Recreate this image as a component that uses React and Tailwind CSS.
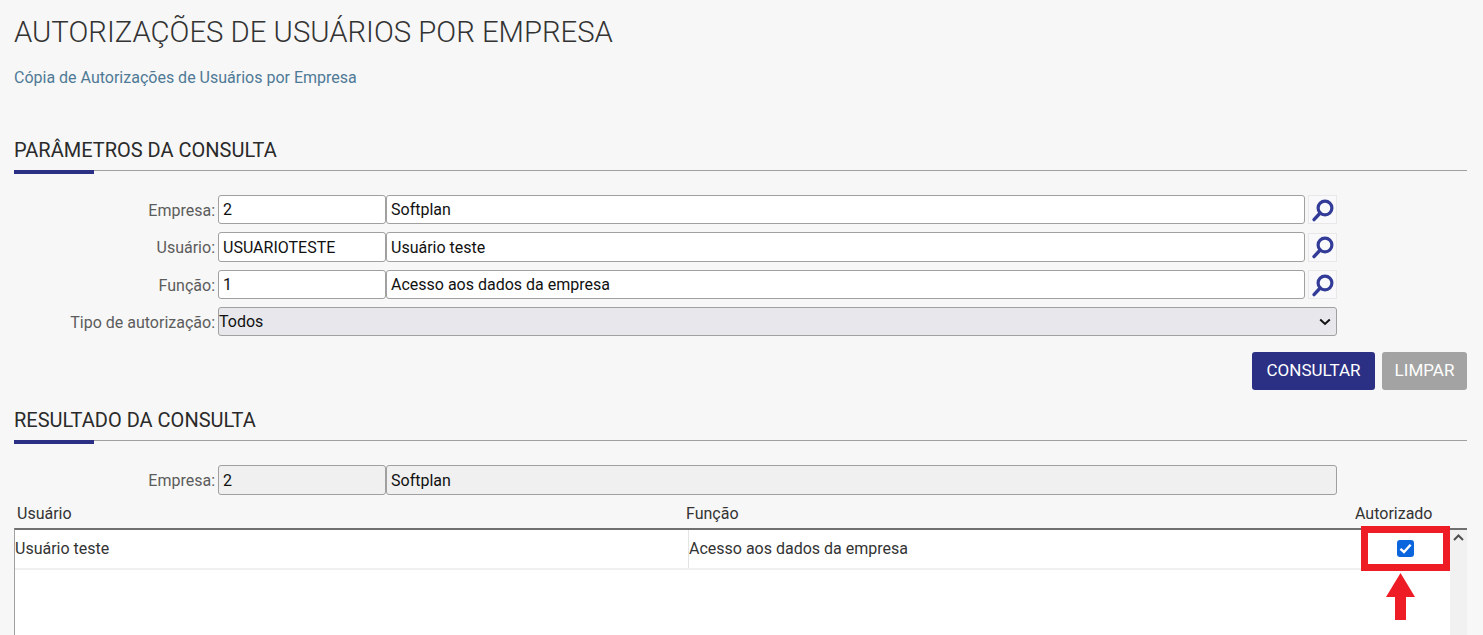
import React from "react";

const F = "font-['Roboto',sans-serif]";

function Lens() {
  return (
    <div className="ml-[3px] w-[29px] h-[29px] border border-[#e8e8e8] bg-[#f9f9fb] flex items-center justify-center">
      <svg width="25" height="26" viewBox="0 0 25 26" fill="none">
        <circle cx="15" cy="11" r="6.9" stroke="#333b98" strokeWidth="3.2" />
        <path d="M10.2 16 L4 22.6" stroke="#333b98" strokeWidth="3.4" strokeLinecap="round" />
      </svg>
    </div>
  );
}

function Box({ className = "", children }) {
  return (
    <div className={`h-full border border-[#a0a0a0] rounded-[3px] pl-[4px] pt-[1px] flex items-center text-[16px] text-[#111] ${className}`}>
      {children}
    </div>
  );
}

function Row({ label, code, name, h = "h-[30px]", disabled = false, lens = true, className = "" }) {
  const bg = disabled ? "bg-[#f0f0f0]" : "bg-white";
  return (
    <div className={`flex items-center ${h} ${className}`}>
      <div className="w-[204px] shrink-0 text-right pr-[3px] pt-[2px] text-[16px] text-[#5c5c5c]">{label}</div>
      <Box className={`w-[168px] shrink-0 ${bg}`}>{code}</Box>
      <Box className={`${lens ? "w-[919px]" : "w-[951px]"} shrink-0 ${bg}`}>{name}</Box>
      {lens && <Lens />}
    </div>
  );
}

function Section({ title, className = "" }) {
  return (
    <div className={className}>
      <div className="h-[30px] mb-[5px] flex items-center text-[20px] text-[#2a2a2a]">{title}</div>
      <div className="relative h-[1px] bg-[#a0a0a0]">
        <div className="absolute left-0 top-0 w-[80px] h-[4px] bg-[#2b3084]" />
      </div>
    </div>
  );
}

export default function App() {
  return (
    <div className={`relative w-[1483px] h-[635px] overflow-hidden bg-[#f7f7f7] pl-[14px] pr-[16px] ${F}`}>
      <h1 className="pt-[14px] h-[52px] text-[29.3px] leading-[36px] font-light text-[#333]">AUTORIZAÇÕES DE USUÁRIOS POR EMPRESA</h1>
      <a className="block mt-[16px] h-[20px] leading-[20px] text-[16px] text-[#4f7a96]">Cópia de Autorizações de Usuários por Empresa</a>

      <Section title="PARÂMETROS DA CONSULTA" className="mt-[47px]" />

      <div className="mt-[24px] flex flex-col gap-[8px]">
        <Row label="Empresa:" code="2" name="Softplan" h="h-[29px]" />
        <Row label="Usuário:" code="USUARIOTESTE" name="Usuário teste" />
        <Row label="Função:" code="1" name="Acesso aos dados da empresa" h="h-[29px]" />
        <div className="flex items-center h-[29px]">
          <div className="w-[204px] shrink-0 text-right pr-[3px] pt-[2px] text-[16px] text-[#5c5c5c]">Tipo de autorização:</div>
          <div className="w-[1119px] h-full shrink-0 border border-[#a0a0a0] rounded-[3px] bg-[#e8e8ec] flex items-center justify-between pl-[0px] pr-[5px] pt-[1px] text-[16px] text-[#111]">
            <span>Todos</span>
            <svg width="12" height="8" viewBox="0 0 12 8" fill="none">
              <path d="M1.2 1.5 L6 6 L10.8 1.5" stroke="#111" strokeWidth="2" />
            </svg>
          </div>
        </div>
      </div>

      <div className="mt-[16px] flex justify-end gap-[7px] h-[38px]">
        <button className="w-[123px] rounded-[3px] bg-[#2b3084] text-white text-[17px]">CONSULTAR</button>
        <button className="w-[85px] rounded-[3px] bg-[#a3a3a3] text-white text-[17px]">LIMPAR</button>
      </div>

      <Section title="RESULTADO DA CONSULTA" className="mt-[15px]" />

      <Row label="Empresa:" code="2" name="Softplan" disabled lens={false} className="mt-[24px]" />

      <div className="flex h-[33px] pt-[5px] items-center text-[16px] text-[#333]">
        <div className="w-[672px] pl-[3px]">Usuário</div>
        <div className="w-[669px]">Função</div>
        <div>Autorizado</div>
      </div>

      <div className="flex h-[110px] border-t-2 border-l border-t-[#707070] border-l-[#a0a0a0] bg-white">
        <div className="flex-1">
          <div className="flex h-[40px] border-b-2 border-[#f0f0f0] text-[16px] text-[#333]">
            <div className="w-[673px] flex items-center">Usuário teste</div>
            <div className="flex-1 border-l border-[#e4e4e4] pl-[0px] flex items-center">Acesso aos dados da empresa</div>
            <div className="w-[89px] pb-[2px] flex items-center justify-center">
              <span className="w-[17px] h-[17px] rounded-[3px] bg-[#0b65dc] flex items-center justify-center">
                <svg width="15" height="15" viewBox="0 0 15 15" fill="none">
                  <path d="M2.4 7.8 L6 11 L12.6 3.8" stroke="white" strokeWidth="2.4" />
                </svg>
              </span>
            </div>
          </div>
        </div>
        <div className="w-[17px] bg-[#f1f1f1] flex justify-center pt-[4px]">
          <svg width="11" height="7" viewBox="0 0 11 7" fill="none">
            <path d="M1 6 L5.5 1.5 L10 6" stroke="#505050" strokeWidth="2" />
          </svg>
        </div>
      </div>

      {/* annotation overlay */}
      <div className="absolute left-[1361px] top-[526px] w-[89px] h-[45px] border-[7px] border-[#ee1c25]" />
      <svg className="absolute left-[1386px] top-[573px]" width="29" height="47" viewBox="0 0 29 47">
        <path d="M14.5 0 L29 24 L20 24 L20 47 L9 47 L9 24 L0 24 Z" fill="#ee1c25" />
      </svg>
    </div>
  );
}
